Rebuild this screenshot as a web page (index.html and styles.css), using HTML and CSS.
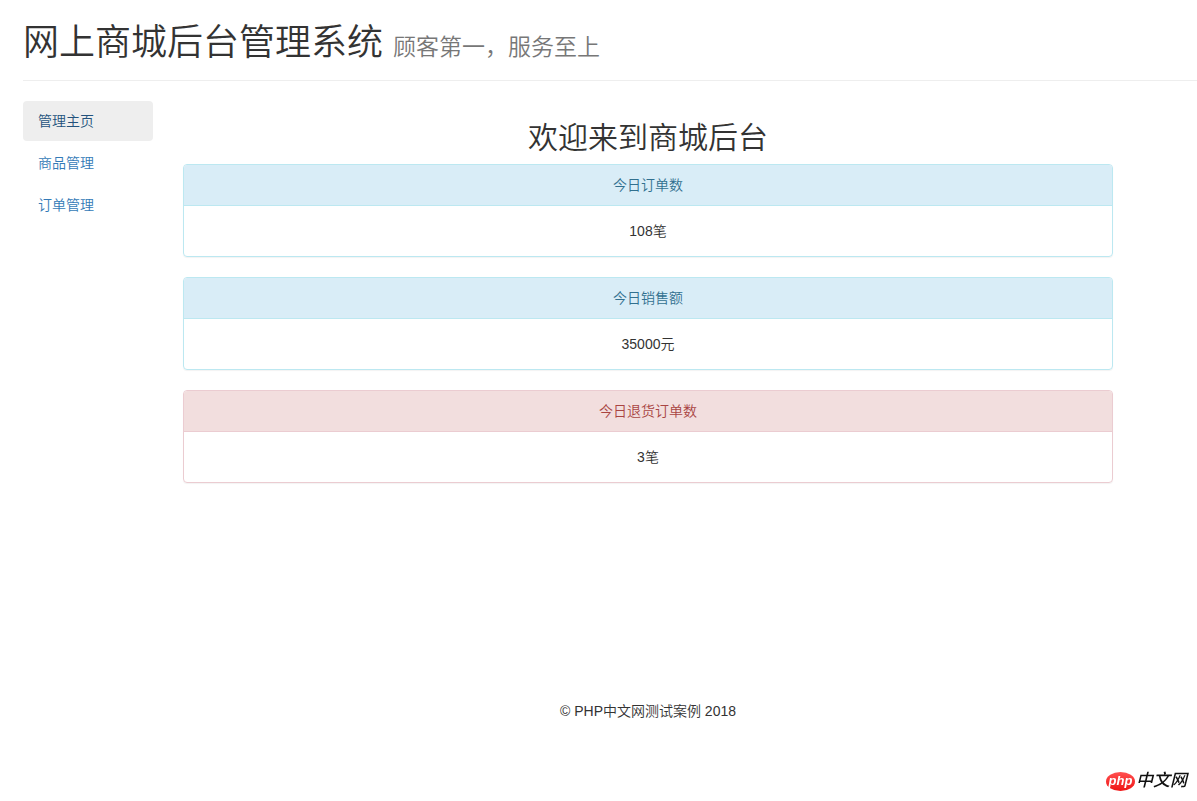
FILE: index.html
```html
<!DOCTYPE html>
<html lang="zh-CN">
<head>
<meta charset="utf-8">
<title>网上商城后台管理系统</title>
<link rel="stylesheet" href="styles.css">
</head>
<body>
<header class="page-header">
  <h1>网上商城后台管理系统 <small>顾客第一，服务至上</small></h1>
</header>
<div class="layout">
  <nav class="side-nav">
    <a class="active" href="#">管理主页</a>
    <a href="#">商品管理</a>
    <a href="#">订单管理</a>
  </nav>
  <main class="content">
    <h2>欢迎来到商城后台</h2>
    <section class="panel panel-info">
      <h3 class="panel-heading">今日订单数</h3>
      <p class="panel-body">108笔</p>
    </section>
    <section class="panel panel-info">
      <h3 class="panel-heading">今日销售额</h3>
      <p class="panel-body">35000元</p>
    </section>
    <section class="panel panel-danger">
      <h3 class="panel-heading">今日退货订单数</h3>
      <p class="panel-body">3笔</p>
    </section>
    <footer class="footer">© PHP中文网测试案例 2018</footer>
  </main>
</div>
<div class="brand">
  <span class="brand-badge">php</span>
  <span class="brand-name">中文网</span>
</div>
</body>
</html>
```
FILE: styles.css
```css
* {
  box-sizing: border-box;
}

body {
  margin: 0;
  padding-left: 23px;
  font: 14px/20px "Liberation Sans", "Noto Sans CJK SC", sans-serif;
  font-weight: 350;
  color: #333;
  background: #fff;
}

.page-header {
  margin-bottom: 20px;
  padding: 23px 0 17px;
  border-bottom: 1px solid #eee;
}

h1,
h2,
h3,
p {
  margin: 0;
  font-weight: inherit;
}

h1 {
  font-size: 36px;
  line-height: 40px;
}

h1 small {
  font-size: 23px;
  line-height: 1;
  color: #777;
}

.layout {
  display: flex;
  gap: 30px;
}

.side-nav {
  display: flex;
  flex-direction: column;
  flex: 0 0 130px;
  gap: 2px;
}

.side-nav a {
  padding: 10px 15px;
  border-radius: 4px;
  color: #337ab7;
  text-decoration: none;
}

.side-nav .active {
  color: #23527c;
  background: #eee;
}

.content {
  flex: 1;
  margin-right: 84px;
  padding-top: 20px;
  text-align: center;
}

h2 {
  margin-bottom: 10px;
  font-size: 30px;
  line-height: 33px;
}

.panel {
  margin-bottom: 20px;
  border: 1px solid #bce8f1;
  border-radius: 4px;
  box-shadow: 0 1px 1px rgba(0, 0, 0, 0.05);
}

.panel-heading {
  padding: 10px 15px;
  border-bottom: 1px solid #bce8f1;
  border-radius: 3px 3px 0 0;
  font-size: 14px;
  color: #31708f;
  background: #d9edf7;
}

.panel-body {
  padding: 15px;
}

.panel-danger {
  border-color: #ebccd1;
}

.panel-danger .panel-heading {
  border-color: #ebccd1;
  color: #a94442;
  background: #f2dede;
}

.footer {
  padding-top: 198px;
}

.brand {
  position: fixed;
  right: 10px;
  bottom: 10px;
  display: flex;
  align-items: center;
  gap: 1px;
}

.brand-badge {
  width: 29px;
  height: 19px;
  border-radius: 50%;
  font-size: 13px;
  line-height: 17px;
  font-style: italic;
  font-weight: 700;
  text-align: center;
  color: #fff;
  background: linear-gradient(#ff5050, #f01414);
}

.brand-name {
  font-size: 17px;
  font-weight: 500;
  font-style: italic;
  color: #111;
}
```
